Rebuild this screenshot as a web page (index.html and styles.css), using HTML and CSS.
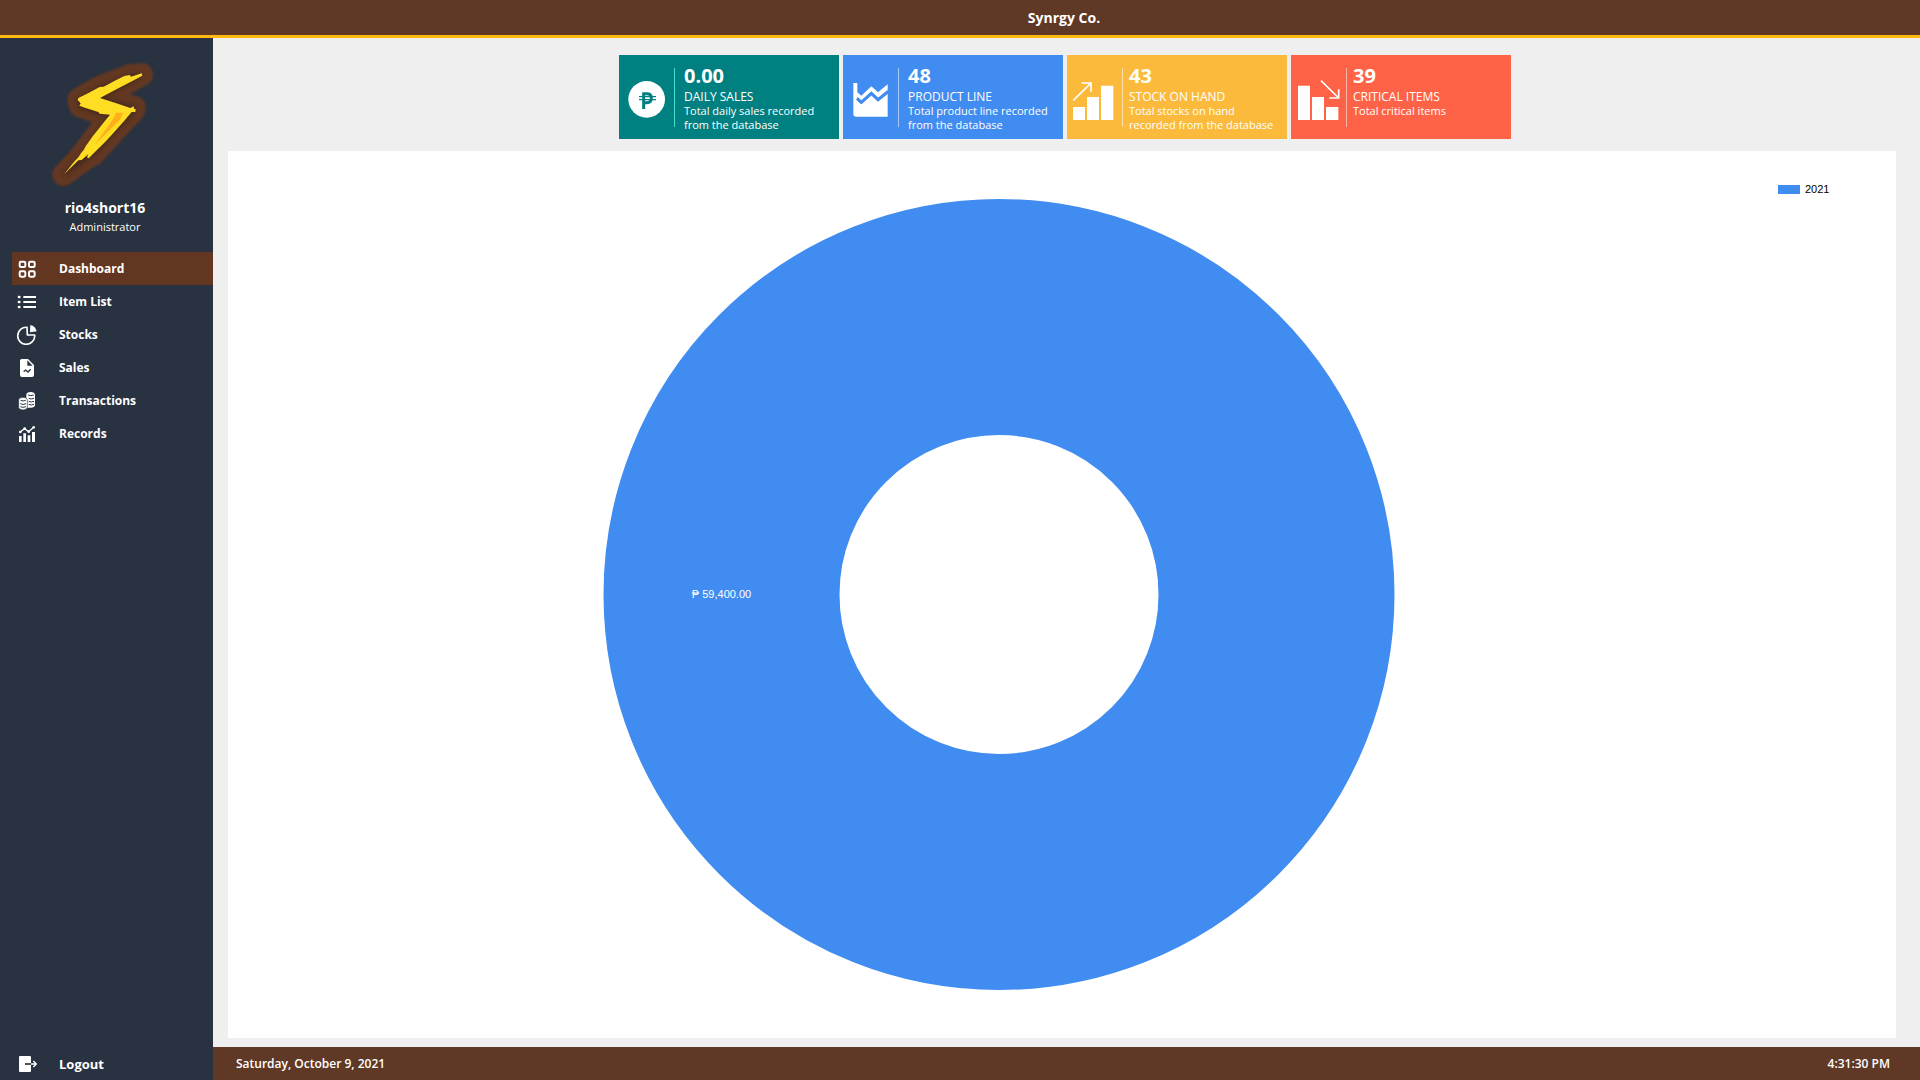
FILE: index.html
```html
<!DOCTYPE html>
<html lang="en">
<head>
<meta charset="utf-8">
<title>Synrgy Co.</title>
<link rel="stylesheet" href="styles.css">
</head>
<body>
<div class="app">
  <header class="topbar"><h1 class="brand">Synrgy Co.</h1></header>

  <aside class="sidebar">
    <div class="profile">
      <svg class="logo" viewBox="148 179 336 390" aria-hidden="true">
        <defs>
          <filter id="glow" x="-20%" y="-20%" width="140%" height="140%"><feGaussianBlur stdDeviation="3"/></filter>
          <filter id="shade" x="-20%" y="-20%" width="140%" height="140%"><feGaussianBlur stdDeviation="7"/></filter>
        </defs>
        <g fill="#633721" stroke="#633721" stroke-linejoin="round">
          <path filter="url(#glow)" stroke-width="68" d="M426 226L388 229L300 264L237 300L242 320L298 340L332 348L294 404L240 475L192 526L264 474L280 466L340 400L400 336L404 324L300 296Z"/>
        </g>
        <path filter="url(#shade)" fill="#47291b" stroke="#47291b" stroke-width="10" d="M426 228L388 231L300 266L237 302L242 322L298 342L332 350L294 406L240 477L192 526L264 476L280 468L340 402L400 338L404 326L300 298Z"/>
        <path fill="#ffdd22" d="M426 222L428 229L398 245L356 267L301 296L350 312L392 326L402 321L403 328L408 329L407 338L396 338L374 364L346 396L320 424L292 452L267 477L262 474L266 464L246 482L236 483L192 526L222 489L236 474L245 460L252 452L257 442L278 412L296 390L318 362L331 346L300 343L296 338L258 326L239 319L243 312L234 302L236 296L262 283L300 263L312 262L344 245L374 230L390 227L394 232Z"/>
        <path fill="#ffae1c" d="M349 340L371 340L360 362L338 384L314 408L285 437L306 407L324 382L342 356Z"/>
      </svg>
      <strong class="user-name">rio4short16</strong>
      <span class="user-role">Administrator</span>
    </div>
    <nav class="menu">
      <a class="item active" href="#dashboard">
        <svg class="icon" viewBox="52 43 60 60" aria-hidden="true"><g fill="none" stroke="#fff" stroke-width="6"><rect x="60" y="51" width="17" height="16" rx="4"/><rect x="88" y="51" width="17" height="16" rx="4"/><rect x="60" y="80" width="17" height="16" rx="4"/><rect x="88" y="80" width="17" height="16" rx="4"/></g></svg>
        <span>Dashboard</span></a>
      <a class="item" href="#items">
        <svg class="icon" viewBox="51 141 60 60" aria-hidden="true"><g stroke="#fff" stroke-width="6"><path d="M70 156H108M70 171H108M70 186H108"/><path stroke-width="8" stroke-linecap="round" d="M57 156h1M57 171h1M57 186h1"/></g></svg>
        <span>Item List</span></a>
      <a class="item" href="#stocks">
        <svg class="icon" viewBox="51 240 60 60" aria-hidden="true"><path fill="none" stroke="#fff" stroke-width="5" stroke-linejoin="round" d="M81 247A25.500 25.500 0 1 0 104 270H82Z"/><path fill="#fff" d="M91 240Q106 243 110 259L90 262Z"/></svg>
        <span>Stocks</span></a>
      <a class="item" href="#sales">
        <svg class="icon" viewBox="51 339 60 60" aria-hidden="true"><path fill="#fff" fill-rule="evenodd" d="M65 342H84L102 360V390Q102 396 96 396H66Q60 396 60 390V347Q60 342 65 342ZM82 346V362H98Z"/><path fill="none" stroke="#293241" stroke-width="4" d="M71 380l6-5 7 6 8-8"/></svg>
        <span>Sales</span></a>
      <a class="item" href="#transactions">
        <svg class="icon" viewBox="51 438 60 60" aria-hidden="true"><path fill="#fff" d="M79 449Q80 441 92 441Q104 441 105 449V481Q104 488 92 488H79Z"/><path fill="#fff" stroke="#293241" stroke-width="2" d="M56 464Q57 457 69 457Q81 457 82 464V487Q81 495 69 495Q57 495 56 487Z"/><path fill="none" stroke="#293241" stroke-width="3" d="M62 466Q69 470 77 466M61 476Q69 481 78 476M61 485Q69 489 78 485M84 450Q92 454 101 450M86 460Q93 464 102 460M86 469Q93 473 102 469M86 478Q93 482 102 478"/></svg>
        <span>Transactions</span></a>
      <a class="item" href="#records">
        <svg class="icon" viewBox="51 537 60 60" aria-hidden="true"><path fill="#fff" d="M57 573h8v18h-8zM70 565h8v26h-8zM83 571h8v20h-8zM96 561h9v30h-9z"/><path fill="none" stroke="#fff" stroke-width="4" d="M60 561L74 551L86 560L101 547"/><circle cx="61" cy="561" r="4" fill="#fff"/><circle cx="74" cy="551" r="4" fill="#fff"/><circle cx="86" cy="560" r="4" fill="#fff"/><circle cx="101" cy="547" r="4" fill="#fff"/></svg>
        <span>Records</span></a>
    </nav>
    <button class="item logout" type="button">
      <svg class="icon" viewBox="51 102 60 60" aria-hidden="true"><rect x="57" y="108" width="36" height="48" rx="3" fill="#fff"/><path fill="none" stroke="#293241" stroke-width="5" d="M75 132H93"/><path fill="none" stroke="#fff" stroke-width="4" d="M93 132H109M100 123l9 9-9 9"/></svg>
      <span>Logout</span></button>
  </aside>

  <main class="content">
    <section class="cards">
      <article class="card sales">
        <svg class="card-icon" viewBox="30 30 165 252" aria-hidden="true"><circle cx="113" cy="163" r="55" fill="#fff"/><g fill="none" stroke="#008080"><path stroke-width="9" d="M104 192V146H114Q127 146 127 159Q127 173 114 173H104"/><path stroke-width="4" d="M90 155H141M90 164H141"/></g></svg>
        <div class="card-text"><strong class="value">0.00</strong><h2 class="label">DAILY SALES</h2><p class="desc">Total daily sales recorded<br>from the database</p></div>
      </article>
      <article class="card products">
        <svg class="card-icon" viewBox="24 30 165 252" aria-hidden="true"><path fill="#fff" d="M55 114H67V142L79 152L109 124L129 142L158 118V136L129 159L109 142L79 168L67 157V167L79 178L109 150L129 169L158 146V215H64Q55 215 55 206Z"/><path fill="none" stroke="#418cf0" stroke-width="9" d="M66 160L79 172L109 145L129 164L159 140"/></svg>
        <div class="card-text"><strong class="value">48</strong><h2 class="label">PRODUCT LINE</h2><p class="desc">Total product line recorded<br>from the database</p></div>
      </article>
      <article class="card stock">
        <svg class="card-icon" viewBox="21 30 165 252" aria-hidden="true"><path fill="#fff" d="M39 186h36v39H39zM81 156h36v69H81zM123 122h37v103h-37z"/><path fill="none" stroke="#fff" stroke-width="5" d="M40 166L93 114M65 114H93V140"/></svg>
        <div class="card-text"><strong class="value">43</strong><h2 class="label">STOCK ON HAND</h2><p class="desc">Total stocks on hand<br>recorded from the database</p></div>
      </article>
      <article class="card critical">
        <svg class="card-icon" viewBox="33 30 165 252" aria-hidden="true"><path fill="#fff" d="M54 122h36v103H54zM96 156h36v69H96zM138 186h37v39h-37z"/><path fill="none" stroke="#fff" stroke-width="5" d="M123 107L176 159M148 159H176V133"/></svg>
        <div class="card-text"><strong class="value">39</strong><h2 class="label">CRITICAL ITEMS</h2><p class="desc">Total critical items</p></div>
      </article>
    </section>
    <section class="chart">
      <svg class="donut" viewBox="0 0 791 791" role="img" aria-label="Sales by year">
        <circle cx="395.500" cy="395.500" r="277.500" fill="none" stroke="#418cf0" stroke-width="236"/>
        <text class="slice-label" x="118" y="399" text-anchor="middle">₱ 59,400.00</text>
      </svg>
      <div class="legend"><span class="swatch"></span><span>2021</span></div>
    </section>
  </main>

  <footer class="statusbar"><span>Saturday, October 9, 2021</span><time>4:31:30 PM</time></footer>
</div>
</body>
</html>
```
FILE: styles.css
```css
* { box-sizing: border-box; }

body {
  margin: 0;
  font-family: "Open Sans", "Noto Sans", sans-serif;
  font-size: 12px;
  color: #fff;
  background: #efefef;
}

.app {
  display: grid;
  grid-template: auto 1fr 33px / 213px 1fr;
  min-height: 100vh;
}

.topbar {
  grid-column: 1 / -1;
  height: 38px;
  padding-left: 208px;
  border-bottom: 3px solid #ffb90f;
  background: #5f3926;
}

.brand {
  margin: 0;
  font-size: 14px;
  line-height: 35px;
  text-align: center;
}

.sidebar {
  grid-row: 2 / 4;
  display: flex;
  flex-direction: column;
  background: #293241;
}

.profile {
  display: flex;
  flex-direction: column;
  align-items: center;
  height: 214px;
  padding: 21px 3px 0 0;
}

.logo { width: 112px; height: 130px; }
.user-name { margin-top: 9px; font-size: 14px; line-height: 20px; }
.user-role { font-size: 11px; line-height: 18px; }

.menu { flex: 1; }

.item {
  display: flex;
  align-items: center;
  gap: 22px;
  height: 33px;
  margin-left: 12px;
  padding: 1px 0 0 5px;
  border: 0;
  background: none;
  color: #fff;
  font: bold 12px/20px "Open Sans", "Noto Sans", sans-serif;
  text-align: left;
  text-decoration: none;
}

.item.active { background: #633622; }
.item.logout { padding-top: 0; font-size: 13px; }
.icon { width: 20px; height: 20px; }

.content {
  display: flex;
  flex-direction: column;
  padding: 17px 24px 9px 15px;
}

.cards {
  display: flex;
  justify-content: center;
  gap: 4px;
  padding-left: 6px;
}

.card {
  display: flex;
  width: 220px;
  height: 84px;
}

.card.sales { background: #008080; --line: #40e0d0; }
.card.products { background: #418cf0; --line: #a5c9fa; }
.card.stock { background: #fbba3c; --line: #fde0a6; }
.card.critical { background: #ff6347; --line: #ffb5a8; }

.card-icon { width: 55px; height: 84px; }

.card-text {
  position: relative;
  padding: 7px 0 0 10px;
  white-space: nowrap;
}

.stock .card-text,
.critical .card-text { padding-left: 7px; }

.card-text::before {
  content: "";
  position: absolute;
  left: 0;
  top: 13px;
  width: 1px;
  height: 59px;
  background: var(--line);
}

.value { display: block; font-size: 20px; line-height: 27px; }
.label { margin: 0; font-size: 12px; font-weight: normal; line-height: 15px; }
.desc { margin: 0; font-size: 11px; line-height: 14px; }

.chart {
  flex: 1;
  display: flex;
  min-height: 0;
  margin-top: 12px;
  padding: 48px 0;
  background: #fff;
}

.donut { flex: 1; min-width: 0; height: calc(100vh - 289px); }
.slice-label { font: 11px "Liberation Sans", Arial, sans-serif; fill: #fff; }

.legend {
  display: flex;
  align-items: center;
  gap: 5px;
  width: 126px;
  height: 14px;
  margin-top: -17px;
  padding-left: 8px;
  color: #000;
  font: 11px/14px "Liberation Sans", Arial, sans-serif;
}

.swatch { width: 22px; height: 9px; background: #418cf0; }

.statusbar {
  display: flex;
  align-items: center;
  justify-content: space-between;
  padding: 0 30px 0 23px;
  background: #5f3926;
  font-weight: 600;
}
```
